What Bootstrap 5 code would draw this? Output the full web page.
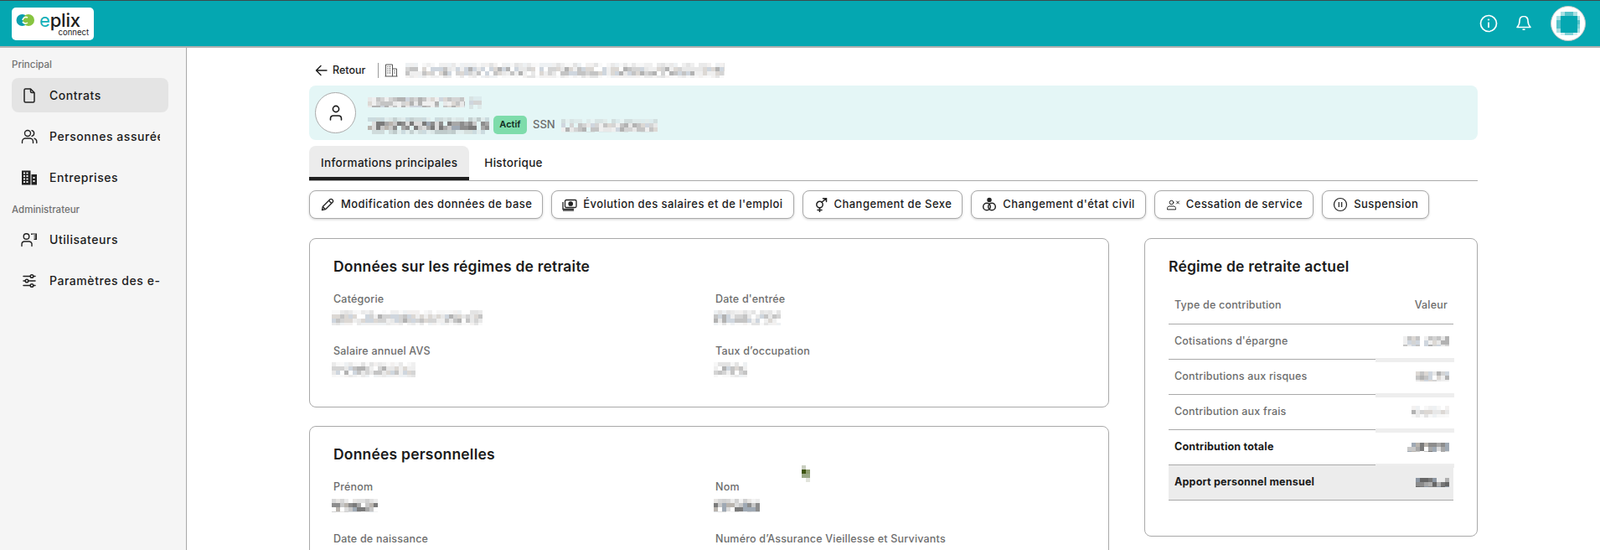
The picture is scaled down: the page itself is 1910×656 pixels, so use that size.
<!DOCTYPE html>
<html lang="fr">
<head>
<meta charset="UTF-8">
<title>ePlix Connect - Contrat</title>
<link href="https://cdn.jsdelivr.net/npm/bootstrap@5.3.3/dist/css/bootstrap.min.css" rel="stylesheet">
<style>
    html, body { height: 100%; overflow: hidden; }
    body { font-family: "Inter", "Liberation Sans", sans-serif; font-size: 14px; color: #1b1b1b; background: #fff; }
    svg { display: block; flex-shrink: 0; }
    .top-bar { height: 57px; background: #04a7b1; border-top: 1px solid #3c4a4c; border-bottom: 2px solid #b0b0b0; padding: 0 17px 0 14px; }
    .logo-box { width: 98px; height: 39px; background: #fff; border-radius: 5px; padding: 5px 5px 0 5px; margin-top: 1px; }
    .logo-name { font-family: "Inter", sans-serif; font-size: 22px; line-height: 20px; font-weight: 500; color: #1c1c1c; letter-spacing: -.2px; }
    .logo-name b { font-weight: 400; color: #12b0b8; }
    .logo-sub { font-size: 9.5px; line-height: 10px; text-align: right; color: #222; margin-right: 1px; }
    .avatar-top { width: 42px; height: 42px; border-radius: 50%; background: #fff; border: 1px solid #c5c5c5; margin-left: 22px; }
    .shell { height: calc(100% - 57px); }
    .side-nav { width: 223px; background: #f5f5f5; border-right: 1px solid #a9a9a9; padding: 12px 21px 0 14px; flex-shrink: 0; }
    .side-head { font-size: 11.5px; line-height: 16px; font-weight: 500; color: #717171; }
    .side-item { height: 41px; margin: 0 0 8px; padding-left: 11px; border-radius: 8px; gap: 14px; font-weight: 500; font-size: 14px; letter-spacing: .55px; color: #1b1b1b; white-space: nowrap; overflow: hidden; text-decoration: none; }
    .side-item.on { background: #e4e4e4; }
    .side-item span { display: block; overflow: hidden; width: 132px; }
    .side-item svg { width: 20px; height: 20px; }
    .head-two { margin-top: 10px; margin-bottom: 7px; }
    .main-pane { flex: 1; padding: 17px 146px 0; min-width: 0; overflow: hidden; position: relative; }
    .back-row { height: 20px; margin-bottom: 8px; padding-left: 7px; font-size: 12.5px; font-weight: 500; }
    .back-sep { width: 1px; height: 18px; background: #9a9a9a; margin: 0 7px 0 15px; }
    .person-band { height: 65px; background: #e4f6f6; border-radius: 8px; padding-left: 7px; margin-bottom: 7px; }
    .person-round { width: 49px; height: 49px; border-radius: 50%; background: #fff; border: 1px solid #a9a9a9; margin-right: 14px; }
    .state-pill { height: 22px; width: 40px; border-radius: 5px; background: #7edcab; font-size: 11px; font-weight: 600; color: #10291d; margin: 0 7px 0 5px; }
    .ssn-txt { color: #6b6b6b; font-weight: 500; font-size: 13px; margin-right: 7px; }
    .tab-strip { border-bottom: 1px solid #a9a9a9; margin-bottom: 11px; }
    .tab-btn { height: 41px; padding: 0 14px; font-weight: 500; font-size: 13.5px; letter-spacing: .3px; color: #1b1b1b; }
    .tab-btn.on { background: #ececec; border-radius: 8px 8px 0 0; border-bottom: 4px solid #1f1f1f; padding-top: 4px; margin-right: 4px; }
    .act-row { gap: 10px; margin-bottom: 23px; }
    .act-btn { height: 34px; padding: 0 12px; gap: 7px; border: 1px solid #a9a9a9; border-radius: 8px; background: #fff; box-shadow: 0 1px 3px rgba(0,0,0,.18); font-size: 13px; font-weight: 500; letter-spacing: .45px; color: #1b1b1b; white-space: nowrap; }
    .act-btn:hover { background: #fff; border-color: #a9a9a9; color: #1b1b1b; }
    .act-btn svg { width: 18px; height: 18px; }
    .info-box { border: 1px solid #a9a9a9; border-radius: 8px; padding: 21px 28px 0; background: #fff; }
    .box-title { font-size: 17.5px; line-height: 24px; font-weight: 600; letter-spacing: .2px; margin: 0 0 19px; color: #1b1b1b; }
    .box-one { height: 202px; margin-bottom: 22px; }
    .box-two { height: 300px; }
    .field-grid { display: grid; grid-template-columns: 456px 1fr; row-gap: 26px; }
    .field-name { font-size: 12.5px; line-height: 16px; font-weight: 500; color: #6d6d6d; letter-spacing: .2px; }
    .field-val { height: 20px; margin-left: -2px; }
    .left-col { flex: 1; min-width: 0; }
    .right-col { width: 398px; margin-left: 42px; flex-shrink: 0; }
    .box-right { height: 356px; }
    .box-right .box-title { margin-bottom: 14px; }
    .plan-table { margin: 0; width: 340px; }
    .plan-table td, .plan-table th { height: 42px; padding: 0 7px; font-size: 12.5px; font-weight: 500; color: #6d6d6d; border-bottom: 1px solid #a9a9a9; vertical-align: middle; letter-spacing: .2px; background: transparent; box-shadow: none; }
    .plan-table .sum-row td { color: #1b1b1b; font-weight: 700; }
    .plan-table .own-row td { background: #ececec; }
    .plan-table td:last-child, .plan-table th:last-child { text-align: right; padding-right: 5px; position: relative; }
    .plan-table th:last-child { padding-right: 7px; }
    .plan-table .fade-line td:last-child::after { content: ""; position: absolute; left: -1px; right: -1px; bottom: -4px; height: 5px; background: #eeeeee; }
    .mosaic { display: inline-block; vertical-align: middle; }
    .mosaic svg { display: inline-block; }
    .stray-spot { position: absolute; left: 734px; top: 496px; }
</style>
</head>
<body>

<!-- top bar -->
<header class="top-bar d-flex align-items-center justify-content-between">
    <div class="logo-box">
        <div class="d-flex align-items-center">
            <svg width="23" height="16" viewBox="0 0 23 16" style="margin:0 5px 0 0">
                <circle cx="7.5" cy="8" r="7" fill="#0a9fae"/>
                <circle cx="15" cy="8" r="7" fill="#86c440"/>
                <path d="M8 8a4 4 0 0 1 6-3M14 11a4 4 0 0 1-6-1" fill="none" stroke="#fff" stroke-width="1.6"/>
            </svg>
            <div class="logo-name"><b>e</b>plix</div>
        </div>
        <div class="logo-sub">connect</div>
    </div>
    <div class="d-flex align-items-center">
        <svg width="22" height="22" viewBox="0 0 22 22" fill="none" stroke="#fff" stroke-width="1.7" style="margin-right:21px">
            <circle cx="11" cy="11" r="9.5"/>
            <path d="M11 9.5v6.5"/><circle cx="11" cy="6.5" r=".7" fill="#fff" stroke-width="1"/>
        </svg>
        <svg width="20" height="22" viewBox="0 0 20 22" fill="none" stroke="#fff" stroke-width="1.6" stroke-linejoin="round">
            <path d="M10 2.5c-3.3 0-5 2.6-5 5.600 0 4-1.500 6-3 7.400h16c-1.500-1.400-3-3.400-3-7.400 0-3-1.700-5.600-5-5.600z"/>
            <path d="M8.500 18.200h3" />
        </svg>
        <div class="avatar-top d-flex align-items-center justify-content-center"><span class="mosaic" data-w="28" data-h="28" data-kind="blob"></span></div>
    </div>
</header>

<div class="shell d-flex">
    <!-- side menu -->
    <nav class="side-nav">
        <div class="side-head" style="margin-bottom:8px">Principal</div>
        <a class="side-item on d-flex align-items-center" href="#">
            <svg viewBox="0 0 20 20" fill="none" stroke="#222" stroke-width="1.5" stroke-linejoin="round"><path d="M4 3.500a1.500 1.500 0 0 1 1.500-1.500h6l4.500 4.500v10a1.500 1.500 0 0 1-1.500 1.500h-9a1.500 1.500 0 0 1-1.500-1.500z"/><path d="M11.500 2v3a1.500 1.500 0 0 0 1.500 1.500h3"/></svg>
            <span>Contrats</span>
        </a>
        <a class="side-item d-flex align-items-center" href="#">
            <svg viewBox="0 0 20 20" fill="none" stroke="#222" stroke-width="1.4" stroke-linecap="round"><circle cx="8" cy="6" r="3.500"/><path d="M1.500 17.500v-1.500c0-2.500 2-4 4-4h5c2 0 4 1.500 4 4v1.500"/><path d="M13 2.600a3.500 3.500 0 0 1 0 6.800M16 12.200c1.600.5 2.800 1.900 2.800 3.800v1.500"/></svg>
            <span>Personnes assurées</span>
        </a>
        <a class="side-item d-flex align-items-center" href="#">
            <svg viewBox="0 0 20 20"><path fill="#222" fill-rule="evenodd" d="M1 1.500h10.500v17h-10.500zM3 3.500v2h2v-2zM6.500 3.500v2h2v-2zM3 7v2h2v-2zM6.500 7v2h2v-2zM3 10.500v2h2v-2zM6.500 10.500v2h2v-2zM3 14v2h2v-2zM6.500 14v2h2v-2z"/><path fill="#222" fill-rule="evenodd" d="M12.500 6h6.500v12.500h-6.500zM14.500 9v2h2v-2zM14.500 13v2h2v-2z"/></svg>
            <span>Entreprises</span>
        </a>
        <div class="side-head head-two">Administrateur</div>
        <a class="side-item d-flex align-items-center" href="#">
            <svg viewBox="0 0 20 20" fill="none" stroke="#222" stroke-width="1.4" stroke-linecap="round"><circle cx="6.500" cy="6" r="3.300"/><path d="M1 17.500v-2c0-2 1.500-3.500 3.500-3.500h5c1.500 0 3 1 3.500 2.500v3"/><path fill="#222" stroke="none" d="M12 2.500h7v7.500h-3.500v-1.500h2v-1h-2v-1h2v-1h-2v-1h2v-1h-4v.5h-1.500z"/></svg>
            <span>Utilisateurs</span>
        </a>
        <a class="side-item d-flex align-items-center" href="#">
            <svg viewBox="0 0 20 20" fill="none" stroke="#222" stroke-width="1.5" stroke-linecap="round"><path d="M3 4.500h14M3 10h14M3 15.500h14"/><circle cx="13" cy="4.500" r="1.800" fill="#f5f5f5"/><circle cx="7" cy="10" r="1.800" fill="#f5f5f5"/><circle cx="13" cy="15.500" r="1.800" fill="#f5f5f5"/></svg>
            <span>Paramètres des e-mails</span>
        </a>
    </nav>

    <!-- contract page -->
    <main class="main-pane">
        <div class="back-row d-flex align-items-center">
            <svg width="15" height="14" viewBox="0 0 15 14" fill="none" stroke="#1b1b1b" stroke-width="1.400" stroke-linecap="round" stroke-linejoin="round" style="margin-right:6px"><path d="M14 7H1.500M7 1.500 1.500 7 7 12.500"/></svg>
            <span>Retour</span>
            <div class="back-sep"></div>
            <svg width="16" height="16" viewBox="0 0 16 16" fill="none" stroke="#555" stroke-width="1" style="margin-right:9px"><path d="M1.500 15V1h8v14M9.500 6h5v9M.5 15h15"/><path stroke-width="1.500" d="M3.500 3.500h1M6 3.500h1M3.500 6h1M6 6h1M3.500 8.500h1M6 8.500h1M3.500 11h1M6 11h1M11.500 8.500h1M11.500 11h1"/></svg>
            <span class="mosaic" data-w="381" data-h="18" data-kind="light"></span>
        </div>

        <div class="person-band d-flex align-items-center">
            <div class="person-round d-flex align-items-center justify-content-center">
                <svg width="20" height="22" viewBox="0 0 20 22" fill="none" stroke="#1b1b1b" stroke-width="1.600" stroke-linecap="round"><circle cx="10" cy="6" r="3.600"/><path d="M3.500 19v-1.500c0-2 1.500-3.500 3.500-3.500h6c2 0 3.500 1.500 3.500 3.500V19"/></svg>
            </div>
            <div>
                <div class="d-flex align-items-center" style="height:22px;margin-bottom:6px">
                    <span class="mosaic" data-w="116" data-h="12" data-kind="light"></span>
                    <span class="mosaic" data-w="15" data-h="15" data-kind="light" style="margin-left:5px"></span>
                </div>
                <div class="d-flex align-items-center" style="height:22px">
                    <span class="mosaic" data-w="145" data-h="20"></span>
                    <div class="state-pill d-flex align-items-center justify-content-center">Actif</div>
                    <span class="ssn-txt">SSN</span>
                    <span class="mosaic" data-w="115" data-h="16" data-kind="light"></span>
                </div>
            </div>
        </div>

        <div class="tab-strip d-flex">
            <div class="tab-btn on d-flex align-items-center">Informations principales</div>
            <div class="tab-btn d-flex align-items-center">Historique</div>
        </div>

        <div class="act-row d-flex">
            <button type="button" class="btn act-btn d-flex align-items-center">
                <svg viewBox="0 0 18 18" fill="none" stroke="#222" stroke-width="1.300" stroke-linejoin="round"><path d="M2.500 15.500l.8-4L12 2.800a1.600 1.600 0 0 1 2.300 0l.9.900a1.600 1.600 0 0 1 0 2.300L6.500 14.700z"/><path d="M10.500 4.300l3.200 3.200M3.300 11.500l3.200 3.200"/></svg>
                Modification des données de base
            </button>
            <button type="button" class="btn act-btn d-flex align-items-center">
                <svg viewBox="0 0 18 18" fill="none" stroke="#222" stroke-width="1.300"><rect x="3.500" y="3.500" width="13.500" height="9" rx="1.500"/><circle cx="10.200" cy="8" r="2.200" fill="#222"/><path d="M1 6v8.500h13"/><path d="M1 16h13" /></svg>
                Évolution des salaires et de l'emploi
            </button>
            <button type="button" class="btn act-btn d-flex align-items-center">
                <svg viewBox="0 0 18 18" fill="none" stroke="#222" stroke-width="1.500" stroke-linecap="round"><circle cx="7.500" cy="9" r="3.700"/><path d="M7.500 12.700V17.500M5 15.500h5M10 6.300l5-4.300M11.500 1.800H15.500V5.500"/></svg>
                Changement de Sexe
            </button>
            <button type="button" class="btn act-btn d-flex align-items-center">
                <svg viewBox="0 0 18 18" fill="none" stroke="#222" stroke-width="1.500"><circle cx="6" cy="11.500" r="4.300"/><circle cx="12" cy="11.500" r="4.300"/><circle cx="9" cy="3.500" r="2" fill="#222"/></svg>
                Changement d'état civil
            </button>
            <button type="button" class="btn act-btn d-flex align-items-center">
                <svg viewBox="0 0 18 18" fill="none" stroke="#222" stroke-width="1" stroke-linecap="round"><circle cx="7.500" cy="6.500" r="2.300"/><path d="M2.500 14.500v-1c0-1.500 1-2.500 2.500-2.500h5c1.500 0 2.500 1 2.500 2.500v1zM13.500 5l3 3M16.500 5l-3 3"/></svg>
                Cessation de service
            </button>
            <button type="button" class="btn act-btn d-flex align-items-center">
                <svg viewBox="0 0 18 18" fill="none" stroke="#222" stroke-width="1.200"><circle cx="9" cy="9" r="7.500"/><path d="M7.300 6v6M10.700 6v6"/></svg>
                Suspension
            </button>
        </div>

        <div class="d-flex">
            <div class="left-col">
                <section class="info-box box-one">
                    <h2 class="box-title">Données sur les régimes de retraite</h2>
                    <div class="field-grid">
                        <div><div class="field-name">Catégorie</div><div class="field-val"><span class="mosaic" data-w="180" data-h="18" data-kind="light"></span></div></div>
                        <div><div class="field-name">Date d'entrée</div><div class="field-val"><span class="mosaic" data-w="80" data-h="18" data-kind="light"></span></div></div>
                        <div><div class="field-name">Salaire annuel AVS</div><div class="field-val"><span class="mosaic" data-w="100" data-h="18" data-kind="light"></span></div></div>
                        <div><div class="field-name">Taux d’occupation</div><div class="field-val"><span class="mosaic" data-w="40" data-h="18" data-kind="light"></span></div></div>
                    </div>
                </section>
                <section class="info-box box-two">
                    <h2 class="box-title">Données personnelles</h2>
                    <div class="field-grid">
                        <div><div class="field-name">Prénom</div><div class="field-val"><span class="mosaic" data-w="55" data-h="16"></span></div></div>
                        <div><div class="field-name">Nom</div><div class="field-val"><span class="mosaic" data-w="55" data-h="16"></span></div></div>
                        <div><div class="field-name">Date de naissance</div></div>
                        <div><div class="field-name">Numéro d’Assurance Vieillesse et Survivants</div></div>
                    </div>
                </section>
            </div>
            <div class="right-col">
                <section class="info-box box-right">
                    <h2 class="box-title">Régime de retraite actuel</h2>
                    <table class="plan-table">
                        <tr><th>Type de contribution</th><th>Valeur</th></tr>
                        <tr class="fade-line"><td>Cotisations d'épargne</td><td><span class="mosaic" data-w="55" data-h="12" data-kind="light"></span></td></tr>
                        <tr class="fade-line"><td>Contributions aux risques</td><td><span class="mosaic" data-w="40" data-h="12" data-kind="light"></span></td></tr>
                        <tr class="fade-line"><td>Contribution aux frais</td><td><span class="mosaic" data-w="45" data-h="14" data-kind="light"></span></td></tr>
                        <tr class="sum-row fade-line"><td>Contribution totale</td><td><span class="mosaic" data-w="50" data-h="11"></span></td></tr>
                        <tr class="sum-row own-row"><td>Apport personnel mensuel</td><td><span class="mosaic" data-w="40" data-h="11" data-kind="dark"></span></td></tr>
                    </table>
                </section>
            </div>
        </div>
        <span class="mosaic stray-spot" data-w="10" data-h="20" data-kind="spot"></span>
    </main>
</div>

<script src="https://cdn.jsdelivr.net/npm/bootstrap@5.3.3/dist/js/bootstrap.bundle.min.js"></script>
<script>
    // pixelated placeholders for the values that are blurred out in the source
    let seed = 7;
    function rnd() {
        seed = (seed * 9301 + 49297) % 233280;
        return seed / 233280;
    }
    const palettes = {
        normal: ['#8d8d8d', '#a8a8a8', '#b9b4ae', '#9fa9b4', '#c8c8c8', '#7b7b7b', '#dcdcdc'],
        light: ['#c4c4c4', '#d4d4d4', '#dcd8d4', '#cfd6de', '#e8e8e8', '#b2b2b2', '#efefef'],
        dark: ['#777', '#8b8b8b', '#a5a5a5', '#8c96a2', '#666', '#b0b0b0']
    };
    document.querySelectorAll('.mosaic').forEach(el => {
        const w = +el.dataset.w, h = +el.dataset.h, kind = el.dataset.kind || 'normal';
        const cell = 5;
        let rects = '';
        if (kind === 'blob') {
            [[1,0,'#a9dfe2'],[2,0,'#55c2c9'],[3,0,'#55c2c9'],[4,0,'#a9dfe2'],[0,1,'#a9dfe2'],[5,1,'#a9dfe2'],[0,4,'#a9dfe2'],[5,4,'#a9dfe2'],[1,5,'#d5eff0'],[2,5,'#7fd1d6'],[3,5,'#7fd1d6'],[4,5,'#d5eff0'],[0,2,'#55c2c9'],[0,3,'#55c2c9'],[5,2,'#55c2c9'],[5,3,'#7fd1d6']].forEach(c => {
                rects += `<rect x="${c[0] * 5}" y="${c[1] * 5}" width="5" height="5" fill="${c[2]}"/>`;
            });
            rects += '<rect x="5" y="5" width="20" height="20" fill="#04a7b1"/>';
        } else if (kind === 'spot') {
            rects = '<rect x="0" y="0" width="5" height="5" fill="#c9cfc0"/><rect x="0" y="5" width="5" height="5" fill="#3f5512"/><rect x="5" y="5" width="5" height="5" fill="#8f9e70"/><rect x="0" y="10" width="10" height="5" fill="#9aa886"/><rect x="5" y="15" width="5" height="5" fill="#e2e4dc"/>';
        } else {
            const colors = palettes[kind];
            for (let y = 0; y < h; y += cell) {
                const edge = (y === 0 || y + cell >= h) && h > 12;
                for (let x = 0; x < w; x += cell) {
                    // gaps between blurred words
                    if (rnd() < 0.08) continue;
                    const c = colors[Math.floor(rnd() * colors.length)];
                    rects += `<rect x="${x}" y="${y}" width="${cell}" height="${cell}" fill="${c}" opacity="${edge ? 0.35 : 1}"/>`;
                }
            }
        }
        el.innerHTML = `<svg width="${w}" height="${h}" viewBox="0 0 ${w} ${h}">${rects}</svg>`;
    });
</script>
</body>
</html>
